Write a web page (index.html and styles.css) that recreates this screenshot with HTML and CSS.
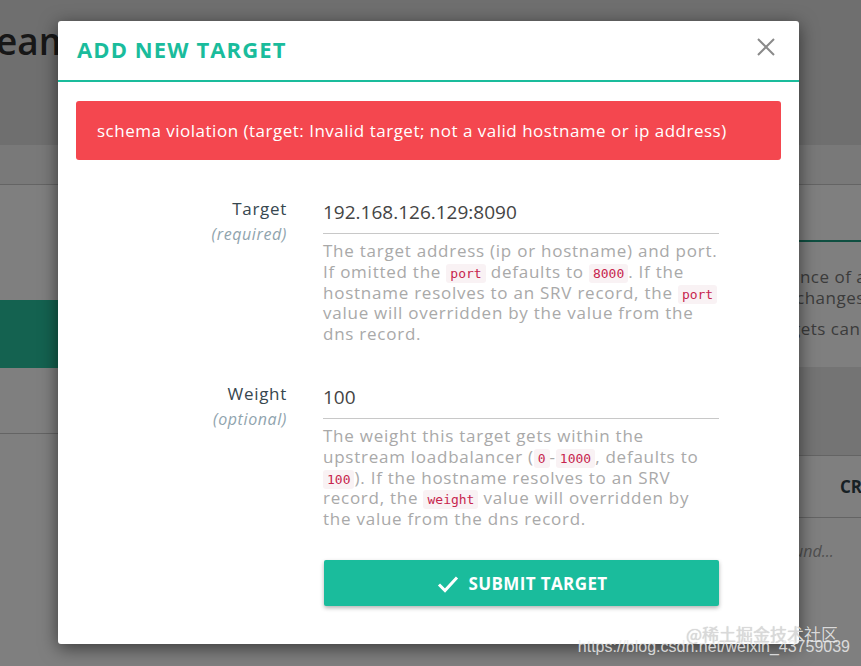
FILE: index.html
```html
<!DOCTYPE html>
<html lang="en">
<head>
<meta charset="utf-8">
<title>Add new target</title>
<link rel="stylesheet" href="styles.css">
</head>
<body>
<div class="page">
  <header class="page-head">
    <h1 class="page-title">eam Targets</h1>
  </header>
  <nav class="page-tabs"></nav>
  <main class="page-main">
    <section class="left-col">
      <div class="left-btn"></div>
      <div class="left-rule"></div>
    </section>
    <section class="right-col">
      <div class="info-card">
        <p class="info-line l1">ance of a</p>
        <p class="info-line l2">changes</p>
        <p class="info-line l3">gets cann</p>
      </div>
      <div class="table-band"></div>
      <div class="table-head">CREATED</div>
      <div class="table-empty">found...</div>
    </section>
  </main>
</div>

<div class="backdrop">
  <div class="modal">
    <div class="modal-head">
      <h2 class="modal-title">ADD NEW TARGET</h2>
      <svg class="close" width="20" height="20" viewBox="0 0 20 20"><path d="M2 2 L18 18 M18 2 L2 18" stroke="#8a8a8a" stroke-width="2" fill="none"/></svg>
    </div>
    <div class="modal-body">
      <div class="alert">schema violation (target: Invalid target; not a valid hostname or ip address)</div>
      <form class="form">
        <div class="field">
          <div class="field-label">
            <div class="label-name">Target</div>
            <div class="label-note">(required)</div>
          </div>
          <div class="field-control">
            <input class="input" type="text" value="192.168.126.129:8090">
            <p class="help">The target address (ip or hostname) and port. If omitted the <code>port</code> defaults to <code>8000</code>. If the hostname resolves to an SRV record, the <code>port</code> value will overridden by the value from the dns record.</p>
          </div>
        </div>
        <div class="field">
          <div class="field-label">
            <div class="label-name">Weight</div>
            <div class="label-note">(optional)</div>
          </div>
          <div class="field-control">
            <input class="input" type="text" value="100">
            <p class="help">The weight this target gets within the upstream loadbalancer (<code>0</code>-<code>1000</code>, defaults to <code>100</code>). If the hostname resolves to an SRV record, the <code>weight</code> value will overridden by the value from the dns record.</p>
          </div>
        </div>
        <div class="actions">
          <button class="submit" type="button">
            <svg width="22" height="18" viewBox="0 0 22 18"><path d="M2 9.5 L8 15.5 L20 2.5" stroke="#fff" stroke-width="3" fill="none"/></svg>
            <span>SUBMIT TARGET</span>
          </button>
        </div>
      </form>
    </div>
  </div>
</div>

<div class="watermark">
  <div class="wm-top">@稀土掘金技术社区</div>
  <div class="wm-url">https://blog.csdn.net/weixin_43759039</div>
</div>
</body>
</html>
```

FILE: styles.css
```css
html, body {
  margin: 0;
  padding: 0;
}
body {
  width: 861px;
  height: 666px;
  overflow: hidden;
  background: #ffffff;
  font-family: "Open Sans", "Noto Sans", sans-serif;
  position: relative;
}

/* background page */
.page-head {
  height: 145px;
  background: #dedede;
}
.page-title {
  margin: 0 0 0 -4px;
  padding-top: 18px;
  font-size: 37px;
  line-height: 46px;
  font-weight: 600;
  letter-spacing: 0;
  color: #2e2e2e;
  white-space: nowrap;
}
.page-tabs {
  height: 39px;
  background: #f3f3f3;
  border-bottom: 1px solid #c9c9c9;
}
.page-main {
  display: grid;
  grid-template-columns: 790px 1fr;
}
.left-col {
  padding-top: 115px;
}
.left-btn {
  height: 68px;
  background: #28c4a1;
}
.left-rule {
  margin-top: 65px;
  border-top: 1px solid #c9c9c9;
}
.right-col {
  padding-top: 55px;
  overflow: hidden;
}
.info-card {
  border-top: 2px solid #1e9f82;
  padding-top: 24px;
}
.info-line {
  margin: 0;
  font-size: 17px;
  line-height: 21px;
  color: #777;
  white-space: nowrap;
  letter-spacing: 0.5px;
}
.info-line.l2 {
  margin-left: 6px;
}
.info-line.l3 {
  margin-top: 10px;
  margin-left: 1px;
}
.table-band {
  margin-top: 28px;
  height: 88px;
  background: #e8e8e8;
  border-bottom: 1px solid #c9c9c9;
}
.table-head {
  height: 61px;
  border-bottom: 1px solid #c9c9c9;
  padding-left: 50px;
  line-height: 61px;
  font-size: 17px;
  font-weight: 700;
  color: #2f4148;
  white-space: nowrap;
}
.table-empty {
  margin-top: 22px;
  margin-left: -10px;
  font-size: 16px;
  font-style: italic;
  color: #a0a0a0;
  white-space: nowrap;
}

/* modal */
.backdrop {
  position: absolute;
  inset: 0;
  background: rgba(0, 0, 0, 0.5);
  padding: 21px 0 0 58px;
}
.modal {
  width: 741px;
  background: #fff;
  border-radius: 3px;
  box-shadow: 0 4px 18px rgba(0, 0, 0, 0.55);
}
.modal-head {
  height: 59px;
  border-bottom: 2px solid #1abc9c;
  display: flex;
  align-items: center;
  justify-content: space-between;
  padding: 0 23px 0 19px;
}
.modal-title {
  margin: 0 0 3px;
  font-size: 22px;
  font-weight: 700;
  color: #1abc9c;
  letter-spacing: 1.1px;
}
.close {
  display: block;
  margin-top: -8px;
}
.modal-body {
  padding: 19px 18px 38px;
}
.alert {
  height: 59px;
  background: #f4474f;
  border-radius: 3px;
  color: #fff;
  display: flex;
  align-items: center;
  padding: 0 21px;
  font-size: 17px;
  letter-spacing: 0.5px;
  white-space: nowrap;
}
.form {
  margin-top: 31px;
}
.field {
  display: grid;
  grid-template-columns: 211px 396px;
  column-gap: 36px;
}
.field + .field {
  margin-top: 31px;
}
.field-label {
  text-align: right;
  padding-top: 7px;
}
.label-name {
  font-size: 17px;
  line-height: 22px;
  color: #37474f;
  letter-spacing: 0.7px;
}
.label-note {
  margin-top: 3px;
  font-size: 16px;
  line-height: 22px;
  font-style: italic;
  color: #90a4ae;
  letter-spacing: 0.6px;
}
.input {
  display: block;
  width: 100%;
  height: 43px;
  box-sizing: border-box;
  border: 0;
  border-bottom: 1px solid #c8c8c8;
  padding: 0;
  background: transparent;
  font-family: "Open Sans", sans-serif;
  font-size: 19px;
  color: #444;
  outline: none;
}
.help {
  margin: 7px 0 0;
  font-size: 17px;
  line-height: 20.8px;
  color: #a9a9a9;
  letter-spacing: 0.75px;
}
.help code {
  font-family: "DejaVu Sans Mono", monospace;
  font-size: 13px;
  line-height: 1;
  letter-spacing: 0;
  color: #c7254e;
  background: #f9f2f4;
  padding: 2px 4px;
  border-radius: 3px;
}
.actions {
  margin-top: 30px;
  margin-left: 248px;
}
.submit {
  width: 395px;
  height: 46px;
  background: #1abc9c;
  border: 0;
  border-radius: 2px;
  box-shadow: 0 2px 4px rgba(0, 0, 0, 0.3);
  color: #fff;
  display: flex;
  align-items: center;
  justify-content: center;
  gap: 9px;
  font-family: "Open Sans", sans-serif;
  font-size: 17px;
  font-weight: 700;
  letter-spacing: 0.4px;
  padding: 2px 0 0 2px;
}

/* watermark */
.watermark {
  position: absolute;
  right: 11px;
  bottom: 10px;
  text-align: right;
}
.wm-top {
  font-family: "Noto Sans CJK SC", sans-serif;
  font-size: 17px;
  line-height: 18px;
  color: #d9d9d9;
  text-shadow: 0 0 1px rgba(0, 0, 0, 0.2);
  margin-right: 12px;
}
.wm-url {
  margin-top: -5px;
  font-family: "Liberation Sans", sans-serif;
  font-size: 16px;
  line-height: 18px;
  color: rgba(235, 235, 235, 0.85);
}
```
